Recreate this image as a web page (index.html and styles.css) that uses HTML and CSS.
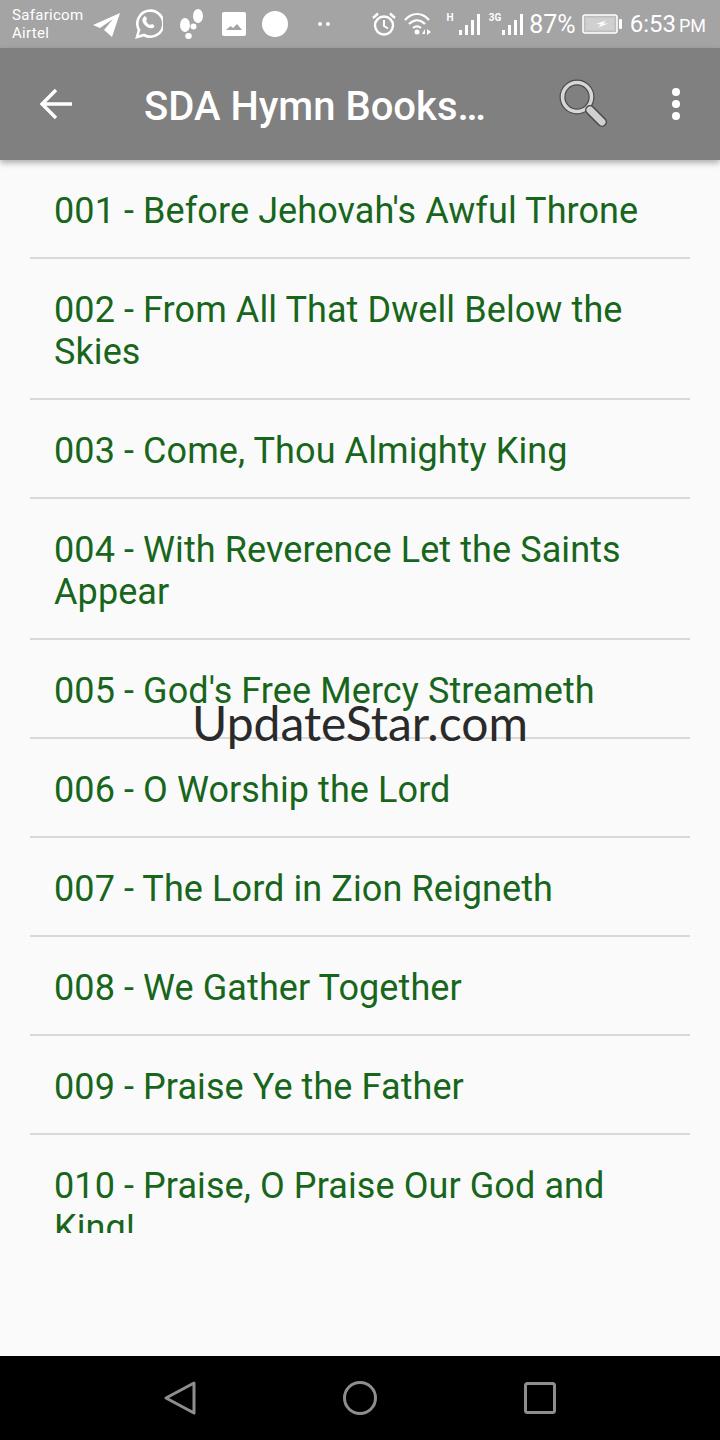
FILE: index.html
```html
<!DOCTYPE html>
<html lang="en">
<head>
    <meta charset="UTF-8">
    <meta name="viewport" content="width=device-width, initial-scale=1.0">
    <title>SDA Hymn Book</title>
    <link rel="stylesheet" href="styles.css">
</head>
<body>
    <div class="status-bar">
        <div class="carriers">Safaricom<br>Airtel</div>
        <div class="notify-icons">
            <svg class="ic-telegram" width="30" height="28" viewBox="0 0 30 28"><path d="M2 15 29 3 21 27 13 20 22 9 9 18Z" fill="#fff"/></svg>
            <svg class="ic-whatsapp" width="30" height="32" viewBox="0 0 30 32"><path d="M4 29 6 22A13 13 0 1 1 11 27Z" fill="none" stroke="#fff" stroke-width="2.6"/><path d="M10 10c2-3 3-2 4 1l-1 2c1 2 2 3 4 4l2-1c3 1 3 3 1 4-5 2-13-6-10-10Z" fill="#fff"/></svg>
            <svg class="ic-steps" width="26" height="32" viewBox="0 0 26 32"><ellipse cx="7" cy="17" rx="5" ry="7" fill="#fff"/><ellipse cx="10.500" cy="28" rx="3.300" ry="3" fill="#fff"/><ellipse cx="20" cy="8" rx="5" ry="7" fill="#fff"/><circle cx="15.500" cy="18.500" r="3" fill="#fff"/></svg>
            <svg class="ic-image" width="24" height="24" viewBox="0 0 24 24"><path d="M2 0H22A2 2 0 0 1 24 2V22A2 2 0 0 1 22 24H2A2 2 0 0 1 0 22V2A2 2 0 0 1 2 0ZM4 18H20L15 12 11 16 8.500 14Z" fill="#fff" fill-rule="evenodd"/></svg>
            <svg class="ic-dot" width="26" height="26" viewBox="0 0 26 26"><circle cx="13" cy="13" r="13" fill="#fff"/></svg>
            <svg class="ic-more" width="14" height="6" viewBox="0 0 14 6"><circle cx="3" cy="3" r="2" fill="#fff"/><circle cx="11" cy="3" r="2" fill="#fff"/></svg>
        </div>
        <div class="system-icons">
            <svg class="ic-alarm" width="24" height="24" viewBox="0 0 24 24"><circle cx="12" cy="13.500" r="9" fill="none" stroke="#fff" stroke-width="2.400"/><path d="M12 8v6l4 2.500" fill="none" stroke="#fff" stroke-width="2"/><path d="M1 6 6 1.500M23 6 18 1.500" stroke="#fff" stroke-width="2.400"/></svg>
            <svg class="ic-wifi" width="28" height="24" viewBox="0 0 28 24"><path d="M1 8C8 0 18 0 25 8M5 12C10 7 16 7 21 12M9 16C11.500 14 14.500 14 17 16" fill="none" stroke="#fff" stroke-width="2.200"/><circle cx="13" cy="20" r="2.500" fill="#fff"/><path d="M18 22 21 17V22ZM23 17 27 20 23 23Z" fill="#fff"/></svg>
            <div class="signal signal-h">
                <span class="net-type net-h">H</span>
                <svg width="24" height="21" viewBox="0 0 24 21"><path d="M1 16h3v5H1ZM7 11h3v10H7ZM13 6h3v15h-3ZM19 0h3v21h-3Z" fill="#fff"/></svg>
            </div>
            <div class="signal signal-3g">
                <span class="net-type">3G</span>
                <svg width="24" height="21" viewBox="0 0 24 21"><path d="M1 16h3v5H1ZM7 11h3v10H7ZM13 6h3v15h-3ZM19 0h3v21h-3Z" fill="#fff"/></svg>
            </div>
            <span class="battery-pct">87%</span>
            <svg class="ic-battery" width="40" height="20" viewBox="0 0 40 20"><rect x="1" y="1" width="34" height="18" rx="2" fill="#bdbdbd" stroke="#fff" stroke-width="1.500"/><rect x="3.500" y="3.500" width="29" height="13" fill="#d0d0d0"/><path d="M14 10 24 6.500 21 9.500H26L16 13.500 19 10.500Z" fill="#fff"/><rect x="37" y="5" width="3" height="10" rx="1" fill="#fff"/></svg>
            <span class="clock">6:53<small>PM</small></span>
        </div>
    </div>

    <header class="app-bar">
        <svg class="back" width="34" height="32" viewBox="0 0 34 32"><path d="M33 16H4M17 2 3 16 17 30" fill="none" stroke="#fff" stroke-width="3.400"/></svg>
        <h1 class="title">SDA Hymn Books…</h1>
        <svg class="search" width="50" height="50" viewBox="0 0 50 50">
            <circle cx="19" cy="19" r="14.500" fill="none" stroke="#4a4a4a" stroke-width="6"/>
            <circle cx="19" cy="19" r="14.500" fill="none" stroke="#d6d6d6" stroke-width="3.600"/>
            <path d="M32 32 44 44" stroke="#4a4a4a" stroke-width="10" stroke-linecap="round"/>
            <path d="M32 32 44 44" stroke="#d0d0d0" stroke-width="7" stroke-linecap="round"/>
        </svg>
        <div class="overflow-menu"><i></i><i></i><i></i></div>
    </header>

    <main class="hymn-list">
        <div class="hymn">001 - Before Jehovah's Awful Throne</div>
        <div class="hymn">002 - From All That Dwell Below the Skies</div>
        <div class="hymn">003 - Come, Thou Almighty King</div>
        <div class="hymn">004 - With Reverence Let the Saints Appear</div>
        <div class="hymn">005 - God's Free Mercy Streameth</div>
        <div class="hymn">006 - O Worship the Lord</div>
        <div class="hymn">007 - The Lord in Zion Reigneth</div>
        <div class="hymn">008 - We Gather Together</div>
        <div class="hymn">009 - Praise Ye the Father</div>
        <div class="hymn">010 - Praise, O Praise Our God and King!</div>
    </main>

    <div class="spacer"></div>

    <nav class="nav-bar">
        <svg width="32" height="34" viewBox="0 0 32 34"><path d="M30 2 2 17 30 32Z" fill="none" stroke="#8e8e8e" stroke-width="3" stroke-linejoin="round"/></svg>
        <svg width="34" height="34" viewBox="0 0 34 34"><circle cx="17" cy="17" r="15.500" fill="none" stroke="#8e8e8e" stroke-width="3"/></svg>
        <svg width="32" height="32" viewBox="0 0 32 32"><rect x="1.500" y="1.500" width="29" height="29" rx="2" fill="none" stroke="#8e8e8e" stroke-width="3"/></svg>
    </nav>

    <div class="watermark">UpdateStar.com</div>
</body>
</html>
```

FILE: styles.css
```css
* {
    box-sizing: border-box;
}
body {
    position: relative;
    width: 720px;
    height: 1440px;
    margin: 0;
    overflow: hidden;
    display: flex;
    flex-direction: column;
    font-family: Roboto, "Liberation Sans", sans-serif;
    background: #fafafa;
}
.status-bar {
    height: 48px;
    flex: none;
    display: flex;
    align-items: center;
    padding: 0 14px 0 12px;
    background: #a4a4a4;
    color: #fff;
}
.carriers {
    width: 79px;
    font-size: 15px;
    line-height: 18px;
    letter-spacing: 0.3px;
}
.notify-icons {
    display: flex;
    align-items: center;
}
.ic-whatsapp {
    margin-left: 12px;
}
.ic-steps {
    margin-left: 15px;
}
.ic-image {
    margin-left: 18px;
}
.ic-dot {
    margin-left: 16px;
}
.ic-more {
    margin-left: 29px;
}
.system-icons {
    margin-left: auto;
    display: flex;
    align-items: center;
}
.ic-wifi {
    margin-left: 8px;
}
.signal {
    display: flex;
    align-items: flex-start;
    height: 21px;
}
.signal-h {
    margin-left: 15px;
}
.signal-3g {
    margin-left: 7px;
}
.net-type {
    font-size: 10px;
    line-height: 12px;
    font-weight: 700;
    margin-top: -2px;
}
.net-h {
    margin-right: 4px;
}
.battery-pct {
    margin-left: 4px;
    font-size: 25px;
}
.ic-battery {
    margin-left: 6px;
}
.clock {
    margin-left: 8px;
    font-size: 24px;
}
.clock small {
    margin-left: 3px;
    font-size: 18px;
}
.app-bar {
    height: 112px;
    flex: none;
    display: flex;
    align-items: center;
    position: relative;
    z-index: 1;
    padding: 0 40px 0 39px;
    background: #808080;
    box-shadow: 0 3px 6px rgba(0,0,0,0.3);
}
.title {
    flex: 1;
    margin: 4px 0 0 71px;
    color: #fff;
    font-size: 40px;
    font-weight: 500;
}
.search {
    margin: 0 64px 2px 0;
}
.overflow-menu {
    display: flex;
    flex-direction: column;
    gap: 4px;
}
.overflow-menu i {
    width: 8px;
    height: 8px;
    border-radius: 50%;
    background: #fff;
}
.hymn-list {
    height: 1073px;
    flex: none;
    overflow: hidden;
}
.hymn {
    margin: 0 30px;
    padding: 30px 24px 25px;
    border-bottom: 2px solid #d9d9d9;
    color: #17661b;
    font-size: 36px;
    line-height: 42px;
    letter-spacing: 0.09px;
}
.hymn:last-child {
    border-bottom: none;
}
.spacer {
    flex: 1;
}
.nav-bar {
    height: 84px;
    flex: none;
    display: flex;
    align-items: center;
    justify-content: space-between;
    padding: 0 164px;
    background: #000;
}
.watermark {
    position: absolute;
    top: 693px;
    left: 0;
    width: 100%;
    text-align: center;
    color: #2a2a2a;
    font-family: Lato, sans-serif;
    font-size: 48px;
    line-height: 60px;
}
```
